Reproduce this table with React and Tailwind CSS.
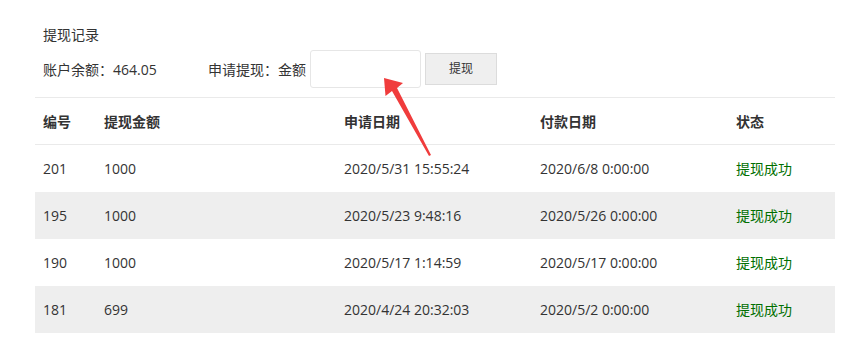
const rows = [
  { id: 201, amount: "1000", applied: "2020/5/31 15:55:24", paid: "2020/6/8 0:00:00" },
  { id: 195, amount: "1000", applied: "2020/5/23 9:48:16", paid: "2020/5/26 0:00:00" },
  { id: 190, amount: "1000", applied: "2020/5/17 1:14:59", paid: "2020/5/17 0:00:00" },
  { id: 181, amount: "699", applied: "2020/4/24 20:32:03", paid: "2020/5/2 0:00:00" },
];

function Arrow() {
  return (
    <svg className="pointer-events-none absolute left-0 top-0" width="856" height="348">
      <polygon points="384,78 385.5,96 392,91 429,156 431,155 397,88 403,83" fill="#f03c3c" />
    </svg>
  );
}

export default function App() {
  return (
    <div
      className="relative h-[348px] w-[856px] bg-white text-[#333]"
      style={{ fontFamily: '"Open Sans", "Noto Sans CJK SC", sans-serif' }}
    >
      <div className="px-[35px] pt-[25px]">
        <div className="pl-2 text-[14px] leading-[20px]">提现记录</div>
        <div className="mt-[5px] flex h-[38px] items-center pl-2 text-[14px]">
          <span className="w-[165px]">账户余额：464.05</span>
          <span className="w-[98px]">申请提现：金额</span>
          <input className="ml-[4px] h-[38px] w-[111px] rounded-[3px] border border-[#e6e6e6] bg-white outline-none" />
          <button className="ml-[4px] h-[32px] w-[72px] border border-[#dcdcdc] bg-[#efefef] text-[12px] text-[#333]">
            提现
          </button>
        </div>
        <table className="mt-[9px] w-[800px] border-collapse text-left text-[14px]">
          <thead>
            <tr className="h-[47px] border-y border-[#eaeaea]">
              <th className="w-[61px] pl-2 font-bold">编号</th>
              <th className="w-[240px] pl-2 font-bold">提现金额</th>
              <th className="w-[196px] pl-2 font-bold">申请日期</th>
              <th className="w-[196px] pl-2 font-bold">付款日期</th>
              <th className="pl-2 font-bold">状态</th>
            </tr>
          </thead>
          <tbody>
            {rows.map((r, i) => (
              <tr key={r.id} className={`h-[47px] ${i % 2 ? "bg-[#eeeeee]" : "bg-white"}`}>
                <td className="pl-2">{r.id}</td>
                <td className="pl-2">{r.amount}</td>
                <td className="pl-2">{r.applied}</td>
                <td className="pl-2">{r.paid}</td>
                <td className="pl-2 text-[#006f00]">提现成功</td>
              </tr>
            ))}
          </tbody>
        </table>
      </div>
      <Arrow />
    </div>
  );
}
